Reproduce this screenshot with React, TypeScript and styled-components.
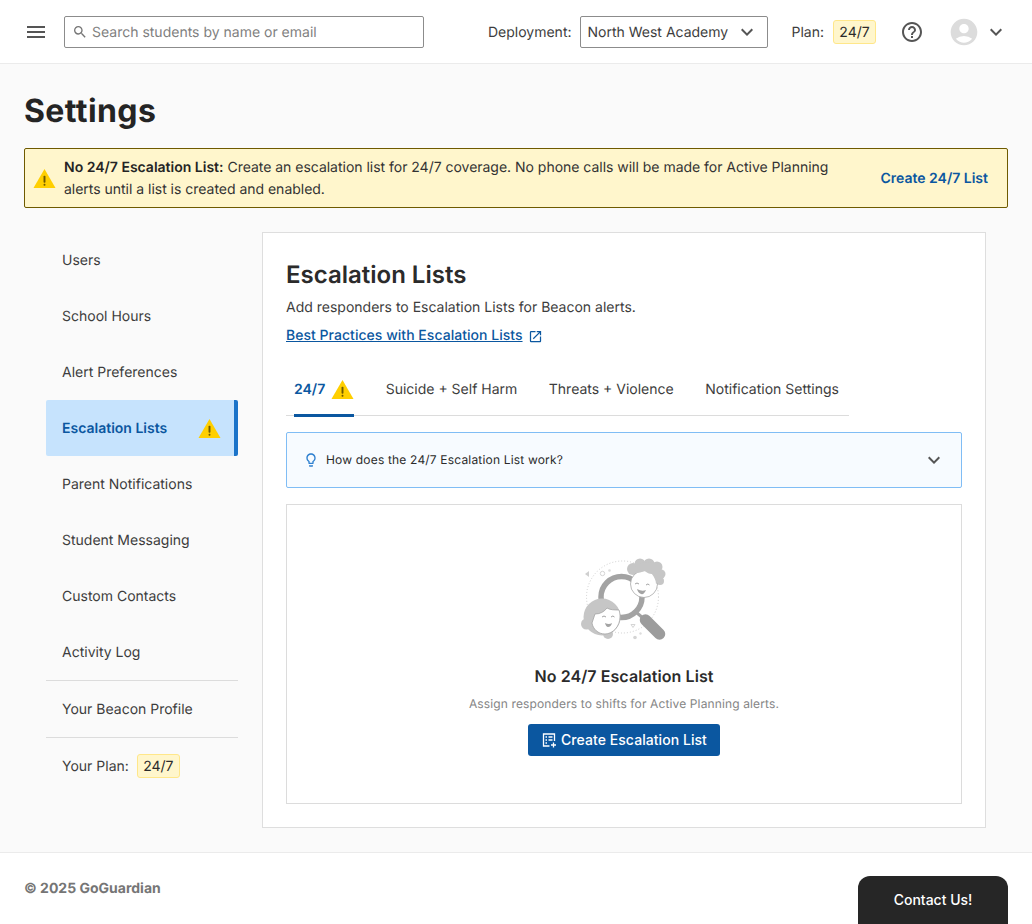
import styled, { createGlobalStyle } from 'styled-components';
import { MdAccountCircle, MdExpandMore, MdHelpOutline, MdMenu, MdOpenInNew, MdOutlineLightbulb, MdSearch } from 'react-icons/md';

const GlobalStyle = createGlobalStyle`
  * {
    box-sizing: border-box;
  }

  body {
    margin: 0;
    background: #ffffff;
    color: #2b2b2b;
    font-family: Inter, "Liberation Sans", sans-serif;
    font-size: 14px;
    text-rendering: geometricPrecision;
  }
`;

const Page = styled.div`
  position: relative;
  display: flex;
  flex-direction: column;
  height: 924px;
  overflow: hidden;
`;

const Header = styled.header`
  display: flex;
  align-items: center;
  flex: none;
  height: 64px;
  padding: 0 24px;
  background: #ffffff;
  border-bottom: 1px solid #ebebeb;
`;

const IconButton = styled.button`
  display: flex;
  padding: 0;
  border: none;
  background: none;
  color: #555555;
`;

const SearchBox = styled.div`
  display: flex;
  align-items: center;
  gap: 4px;
  width: 360px;
  height: 32px;
  margin-left: 16px;
  padding: 1px 0 0 7px;
  background: #ffffff;
  border: 1px solid #8c8c8c;
  border-radius: 2px;
  color: #808080;
  font-size: 14px;

  svg {
    color: #757575;
  }
`;

const HeaderRight = styled.div`
  display: flex;
  align-items: center;
  margin-left: auto;
`;

const HeaderLabel = styled.span<{ $gap: number }>`
  margin-right: ${(p) => p.$gap}px;
  padding-top: 1px;
  color: #3d3d3d;
`;

const Select = styled.div`
  display: flex;
  align-items: center;
  justify-content: space-between;
  width: 188px;
  height: 32px;
  margin-right: 24px;
  padding: 1px 8px 0 7px;
  background: #ffffff;
  border: 1px solid #8c8c8c;
  border-radius: 2px;
  color: #3d3d3d;

  svg {
    color: #555555;
  }
`;

const PlanBadge = styled.span`
  display: inline-flex;
  align-items: center;
  justify-content: center;
  width: 43px;
  height: 24px;
  padding-top: 1px;
  background: #fff6cc;
  border: 1px solid #ffe78a;
  border-radius: 3px;
  color: #2b2b2b;
`;

const HelpButton = styled(IconButton)`
  margin-left: 24px;
`;

const UserButton = styled(IconButton)`
  align-items: center;
  gap: 4px;
  margin-left: 24px;

  svg:first-child {
    color: #dcdcdc;
  }
`;

const Main = styled.main`
  flex: 1;
  padding: 0 24px;
  background: #fafafa;
`;

const PageTitle = styled.h1`
  margin: 0;
  padding-top: 29px;
  height: 84px;
  color: #242424;
  font-size: 32px;
  font-weight: 700;
  line-height: 36px;
  letter-spacing: 0.4px;
`;

const Banner = styled.div`
  display: flex;
  align-items: center;
  height: 60px;
  padding: 0 19px 0 8px;
  background: #fff6cc;
  border: 1px solid #6e5a00;
  border-radius: 2px;
`;

const BannerText = styled.p`
  width: 790px;
  margin: 0 0 0 8px;
  padding-top: 2px;
  color: #333333;
  line-height: 22px;
  letter-spacing: -0.02px;

  strong {
    color: #242424;
    font-weight: 600;
    letter-spacing: 0;
  }
`;

const BannerLink = styled.a`
  margin-left: auto;
  color: #0b57a0;
  font-weight: 600;
`;

const Columns = styled.div`
  display: flex;
  align-items: flex-start;
  margin-top: 24px;
  padding: 0 22px;
`;

const Sidebar = styled.nav`
  flex: none;
  width: 192px;
  margin-right: 24px;
`;

const NavItem = styled.div<{ $active?: boolean; $divided?: boolean }>`
  display: flex;
  align-items: center;
  justify-content: space-between;
  height: ${(p) => (p.$divided ? '57px' : '56px')};
  padding: ${(p) => (p.$active ? '0 13px 0 16px' : '0 16px')};
  background: ${(p) => (p.$active ? '#c6e3fd' : 'transparent')};
  border-top: ${(p) => (p.$divided ? '1px solid #dcdcdc' : 'none')};
  border-right: ${(p) => (p.$active ? '4px solid #1a73c9' : 'none')};
  border-radius: ${(p) => (p.$active ? '2px' : '0')};
  color: ${(p) => (p.$active ? '#0b57a0' : '#3d3d3d')};
  font-weight: ${(p) => (p.$active ? 600 : 400)};
`;

const PlanRow = styled.span`
  display: flex;
  align-items: center;
  gap: 8px;
`;

const Panel = styled.section`
  flex: none;
  width: 724px;
  height: 596px;
  padding: 24px 23px;
  background: #ffffff;
  border: 1px solid #dedede;
`;

const PanelTitle = styled.h2`
  margin: 3px 0 0;
  color: #2b2b2b;
  font-size: 24px;
  font-weight: 600;
  line-height: 30px;
`;

const PanelText = styled.p`
  margin: 7px 0 0;
  color: #3d3d3d;
  line-height: 22px;
`;

const DocLink = styled.a`
  display: inline-flex;
  align-items: center;
  gap: 5px;
  margin-top: 6px;
  color: #0b57a0;
  font-weight: 500;
  line-height: 22px;
  letter-spacing: 0.03px;

  span {
    text-decoration: underline;
  }
`;

const Tabs = styled.div`
  display: flex;
  gap: 31.5px;
  width: 563px;
  height: 55px;
  margin-top: 14px;
  padding-left: 8px;
  border-bottom: 1px solid #dcdcdc;
`;

const Tab = styled.div<{ $active?: boolean }>`
  display: flex;
  align-items: center;
  gap: 6px;
  height: 56px;
  padding-top: 3px;
  border-bottom: 3px solid ${(p) => (p.$active ? '#0b57a0' : 'transparent')};
  color: ${(p) => (p.$active ? '#0b57a0' : '#3d3d3d')};
  font-weight: ${(p) => (p.$active ? 600 : 400)};
`;

const Accordion = styled.div`
  display: flex;
  align-items: center;
  height: 56px;
  margin-top: 16px;
  padding: 0 15px 0 16px;
  background: #f7fbff;
  border: 1px solid #80bdf5;
  border-radius: 2px;
  color: #2b2b2b;
  font-size: 12px;
  font-weight: 400;
  letter-spacing: 0.18px;

  > svg:first-child {
    margin-right: 7px;
    color: #2f80d0;
  }

  > svg:last-child {
    margin-left: auto;
    color: #555555;
  }
`;

const AccordionLabel = styled.span`
  padding-bottom: 1px;
`;

const EmptyState = styled.div`
  display: flex;
  flex-direction: column;
  align-items: center;
  height: 300px;
  margin-top: 16px;
  padding-top: 40px;
  background: #ffffff;
  border: 1px solid #dcdcdc;
`;

const Illustration = styled.svg`
  display: block;
  flex: none;
`;

const EmptyTitle = styled.h3`
  margin: 9px 0 0;
  color: #2b2b2b;
  font-size: 16px;
  font-weight: 600;
  line-height: 24px;
  letter-spacing: 0.08px;
`;

const EmptyText = styled.p`
  margin: 7px 0 0;
  color: #858585;
  font-size: 12px;
  line-height: 18px;
  letter-spacing: 0.13px;
`;

const PrimaryButton = styled.button`
  display: flex;
  align-items: center;
  justify-content: center;
  gap: 4px;
  width: 192px;
  height: 32px;
  margin-top: 11px;
  padding: 0 0 1px;
  border: none;
  border-radius: 3px;
  background: #0b57a0;
  color: #ffffff;
  font-family: inherit;
  font-size: 14px;
  font-weight: 500;
  letter-spacing: 0.06px;
`;

const Footer = styled.footer`
  display: flex;
  align-items: center;
  flex: none;
  height: 72px;
  padding: 0 24px;
  background: #ffffff;
  border-top: 1px solid #ebebeb;
  color: #757575;
  font-size: 14px;
  font-weight: 700;
`;

const ContactButton = styled.button`
  position: absolute;
  right: 24px;
  bottom: 0;
  width: 150px;
  height: 48px;
  padding: 0 0 2px;
  border: none;
  border-radius: 12px 12px 0 0;
  background: #262626;
  color: #ffffff;
  font-family: inherit;
  font-size: 14px;
  font-weight: 500;
`;

const WarningIcon = ({ size }: { size: number }) => (
  <svg width={size} height={size} viewBox="0 0 24 24" aria-hidden="true">
    <path d="M12 2 L23.5 22 H0.5 Z" fill="#ffcf00" />
    <rect x="11" y="9" width="2" height="7.5" rx="0.8" fill="#6e5a00" />
    <rect x="11" y="17.6" width="2" height="2" rx="0.8" fill="#6e5a00" />
  </svg>
);

const CreateListIcon = () => (
  <svg width="16" height="16" viewBox="0 0 16 16" fill="none" stroke="#ffffff" aria-hidden="true">
    <path d="M8.5 14H2.5V2H13.5V9" strokeWidth="1.3" />
    <path d="M4.5 5H6M7.5 5H11.5M4.5 8H6M7.5 8H11.5M4.5 11H6" strokeWidth="1.3" />
    <path d="M12.5 10.5V15.5M10 13H15" strokeWidth="1.3" />
  </svg>
);

const SearchPeople = () => (
  <Illustration width="130" height="110" viewBox="560 545 130 110" aria-hidden="true">
    <circle cx="623.500" cy="597" r="36" fill="none" stroke="#cfcfcf" strokeWidth="1" strokeDasharray="1 2" />
    <path d="M590 571l-4 3 4 3z" fill="#d0d0d0" />
    <circle cx="603.500" cy="573.500" r="2.200" fill="none" stroke="#d5d5d5" />
    <circle cx="610.500" cy="570.500" r="1.300" fill="#dddddd" />
    <circle cx="636" cy="637.500" r="1.800" fill="#d5d5d5" />
    <circle cx="641.500" cy="633.500" r="1.200" fill="#dddddd" />
    <path d="M632 624.500l4 0-2 3z" fill="none" stroke="#d5d5d5" />
    <circle cx="622.500" cy="597" r="20.500" fill="none" stroke="#a3a3a3" strokeWidth="5.500" />
    <path d="M638 613l6 5" stroke="#a3a3a3" strokeWidth="3" />
    <path d="M646.500 620L660.500 634" stroke="#9c9c9c" strokeWidth="11.500" strokeLinecap="round" />
    <g fill="#c6c6c6">
      <circle cx="634" cy="569" r="6" />
      <circle cx="641" cy="564" r="5.500" />
      <circle cx="650" cy="564" r="5.500" />
      <circle cx="658" cy="567" r="5.500" />
      <circle cx="662" cy="574" r="4.500" />
      <circle cx="661" cy="581" r="4" />
      <circle cx="647" cy="573" r="11" />
    </g>
    <circle cx="645" cy="584" r="13.500" fill="#ffffff" stroke="#9c9c9c" strokeWidth="0.700" />
    <path d="M630 572c5 2 11 1 16-1 2 2 4 3 7 3 2 3 4 6 4 10 3-1 5-3 6-6l-4-10-14-4-12 4z" fill="#c6c6c6" />
    <path d="M636 584q2-2 4 0M647 585q2-2 3.500 0" fill="none" stroke="#8a8a8a" strokeWidth="0.800" />
    <path d="M638 589q5 3 9 1q-2 5-5 4q-3-1-4-5z" fill="#a3a3a3" />
    <circle cx="587.500" cy="624" r="5.500" fill="#c6c6c6" />
    <circle cx="609" cy="634" r="5" fill="#c6c6c6" />
    <circle cx="603" cy="617" r="18.500" fill="#c6c6c6" />
    <path d="M596 614c5 0 9-2 12-6 3 2 8 2 12 2 1 3 1 5 1 7 0 9-7 17-15 17-7 0-12-5-13-11 1-3 2-6 3-9z" fill="#ffffff" stroke="#9c9c9c" strokeWidth="0.700" />
    <path d="M603 617q2-2 4 0M612 617q2-2 3.500 0" fill="none" stroke="#8a8a8a" strokeWidth="0.800" />
    <path d="M606 623q4 2 7 0q-1 4-4 4q-2 0-3-4z" fill="#a3a3a3" />
  </Illustration>
);

const navItems = ['Users', 'School Hours', 'Alert Preferences'];
const navItemsAfter = ['Parent Notifications', 'Student Messaging', 'Custom Contacts', 'Activity Log'];

const App = () => {
  return (
    <Page>
      <GlobalStyle />
      <Header>
        <IconButton>
          <MdMenu size={24} />
        </IconButton>
        <SearchBox>
          <MdSearch size={16} />
          Search students by name or email
        </SearchBox>
        <HeaderRight>
          <HeaderLabel $gap={8}>Deployment:</HeaderLabel>
          <Select>
            North West Academy
            <MdExpandMore size={24} />
          </Select>
          <HeaderLabel $gap={9}>Plan:</HeaderLabel>
          <PlanBadge>24/7</PlanBadge>
          <HelpButton>
            <MdHelpOutline size={24} />
          </HelpButton>
          <UserButton>
            <MdAccountCircle size={32} />
            <MdExpandMore size={24} />
          </UserButton>
        </HeaderRight>
      </Header>
      <Main>
        <PageTitle>Settings</PageTitle>
        <Banner>
          <WarningIcon size={23} />
          <BannerText>
            <strong>No 24/7 Escalation List:</strong> Create an escalation list for 24/7 coverage. No phone calls will be made for Active Planning alerts until a list is created and enabled.
          </BannerText>
          <BannerLink>Create 24/7 List</BannerLink>
        </Banner>
        <Columns>
          <Sidebar>
            {navItems.map((item) => (
              <NavItem key={item}>{item}</NavItem>
            ))}
            <NavItem $active>
              Escalation Lists
              <WarningIcon size={23} />
            </NavItem>
            {navItemsAfter.map((item) => (
              <NavItem key={item}>{item}</NavItem>
            ))}
            <NavItem $divided>Your Beacon Profile</NavItem>
            <NavItem $divided>
              <PlanRow>
                Your Plan:
                <PlanBadge>24/7</PlanBadge>
              </PlanRow>
            </NavItem>
          </Sidebar>
          <Panel>
            <PanelTitle>Escalation Lists</PanelTitle>
            <PanelText>Add responders to Escalation Lists for Beacon alerts.</PanelText>
            <DocLink>
              <span>Best Practices with Escalation Lists</span>
              <MdOpenInNew size={15} />
            </DocLink>
            <Tabs>
              <Tab $active>
                24/7
                <WarningIcon size={23} />
              </Tab>
              <Tab>Suicide + Self Harm</Tab>
              <Tab>Threats + Violence</Tab>
              <Tab>Notification Settings</Tab>
            </Tabs>
            <Accordion>
              <MdOutlineLightbulb size={16} />
              <AccordionLabel>How does the 24/7 Escalation List work?</AccordionLabel>
              <MdExpandMore size={24} />
            </Accordion>
            <EmptyState>
              <SearchPeople />
              <EmptyTitle>No 24/7 Escalation List</EmptyTitle>
              <EmptyText>Assign responders to shifts for Active Planning alerts.</EmptyText>
              <PrimaryButton>
                <CreateListIcon />
                Create Escalation List
              </PrimaryButton>
            </EmptyState>
          </Panel>
        </Columns>
      </Main>
      <Footer>© 2025 GoGuardian</Footer>
      <ContactButton>Contact Us!</ContactButton>
    </Page>
  );
};

export default App;
